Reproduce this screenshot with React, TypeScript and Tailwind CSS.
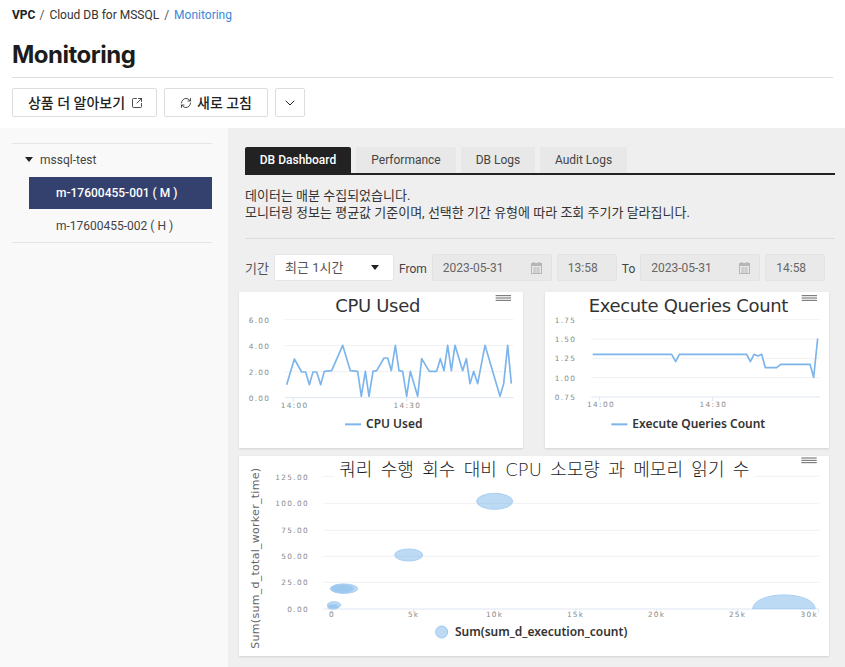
import { ChevronDown, RefreshCw, SquareArrowOutUpRight } from "lucide-react";

const SANS = "font-['Roboto','Noto_Sans_CJK_KR',sans-serif]";

// chart coordinates are 3x card pixels, same scale as the zoomed reference
const cpuPoints =
  "155,290 178,213 200,252 212,252 223,290 234,252 245,252 257,290 268,250 290,248 323,172 346,248 368,250 379,325 391,250 402,325 414,250 425,248 447,210 458,210 469,248 481,172 492,248 503,250 515,325 526,250 548,325 560,212 583,250 605,250 616,212 627,248 638,172 649,248 660,172 683,248 694,212 705,287 716,250 728,287 750,172 795,325 806,287 818,172 829,287";
const queryPoints =
  "158,199 395,199 407,221 418,199 620,199 631,221 642,199 654,204 665,199 676,239 710,239 722,229 810,229 821,268 833,152";

const tabs = [
  { label: "Performance", width: "w-[100px]" },
  { label: "DB Logs", width: "w-[74px]" },
  { label: "Audit Logs", width: "w-[87px]" },
];

function MenuIcon({ x, y }: { x: number; y: number }) {
  return (
    <g className="stroke-[#666666]" strokeWidth={3}>
      <line x1={x} x2={x + 46} y1={y} y2={y} />
      <line x1={x} x2={x + 46} y1={y + 7} y2={y + 7} />
      <line x1={x} x2={x + 46} y1={y + 14} y2={y + 14} />
    </g>
  );
}

function AxisLabel({ x, y, end, children }: { x: number; y: number; end?: boolean; children: string }) {
  return (
    <text
      x={x}
      y={y}
      textAnchor={end ? "end" : "middle"}
      className="fill-[#888888] font-['DejaVu_Sans',sans-serif] text-[22px] tracking-[4px]"
    >
      {children}
    </text>
  );
}

function LineChart({
  viewBox,
  title,
  titleX,
  points,
  gridY,
  gridX,
  labels,
  labelX,
  ticks,
  legendX,
  tickLabelY,
}: {
  viewBox: string;
  title: string;
  titleX: number;
  points: string;
  gridY: number[];
  gridX: [number, number];
  labels: string[];
  labelX: number;
  ticks: [number, number];
  legendX: number;
  tickLabelY: number;
}) {
  const axisY = gridY[gridY.length - 1];
  return (
    <svg viewBox={viewBox} className="h-[156px] w-[284px] bg-white shadow-[0_1px_2px_rgba(0,0,0,0.12)]">
      <text
        x={titleX}
        y={72}
        textAnchor="middle"
        className="fill-[#333333] font-['DejaVu_Sans',sans-serif] text-[54px] tracking-[-1px]"
      >
        {title}
      </text>
      <MenuIcon x={titleX === 428 ? 782 : 785} y={23} />
      {gridY.map((y, i) => (
        <line
          key={y}
          x1={gridX[0]}
          x2={gridX[1]}
          y1={y}
          y2={y}
          strokeWidth={3}
          className={i === gridY.length - 1 ? "stroke-[#dfe6f3]" : "stroke-[#f1f1f1]"}
        />
      ))}
      {labels.map((label, i) => (
        <AxisLabel key={label} x={labelX} y={gridY[i] + 9} end>
          {label}
        </AxisLabel>
      ))}
      <line x1={ticks[0]} x2={ticks[0]} y1={axisY} y2={axisY + 12} strokeWidth={3} className="stroke-[#dfe6f3]" />
      <line x1={ticks[1]} x2={ticks[1]} y1={axisY} y2={axisY + 12} strokeWidth={3} className="stroke-[#dfe6f3]" />
      <AxisLabel x={ticks[0] + 4} y={tickLabelY}>
        14:00
      </AxisLabel>
      <AxisLabel x={ticks[1] + 2} y={tickLabelY}>
        14:30
      </AxisLabel>
      <polyline points={points} fill="none" strokeWidth={5} strokeLinejoin="round" className="stroke-[#7cb5ec]" />
      <line x1={legendX} x2={legendX + 48} y1={409} y2={409} strokeWidth={6} className="stroke-[#7cb5ec]" />
      <text
        x={legendX + 63}
        y={420}
        className="fill-[#333333] font-['Noto_Sans',sans-serif] text-[36px] font-semibold"
      >
        {title}
      </text>
    </svg>
  );
}

function BubbleChart() {
  const gridY = [154, 235, 313, 391];
  const yLabels: [string, number][] = [
    ["125.00", 83],
    ["100.00", 163],
    ["75.00", 242],
    ["50.00", 321],
    ["25.00", 400],
    ["0.00", 480],
  ];
  const xLabels: [string, number][] = [
    ["0", 291],
    ["5k", 536],
    ["10k", 779],
    ["15k", 1022],
    ["20k", 1265],
    ["25k", 1508],
    ["30k", 1723],
  ];
  const ticks = [291, 536, 779, 1022, 1265, 1508, 1751];
  return (
    <svg viewBox="12 12 1770 600" className="h-[200px] w-[590px] bg-white shadow-[0_1px_2px_rgba(0,0,0,0.12)]">
      <text
        x={928}
        y={73}
        textAnchor="middle"
        className="fill-[#1c1c1c] font-['DejaVu_Sans','Noto_Sans_CJK_KR',sans-serif] text-[54px] font-light [word-spacing:8px]"
      >
        쿼리 수행 회수 대비 CPU 소모량 과 메모리 읽기 수
      </text>
      <MenuIcon x={1699} y={18} />
      <line x1={265} x2={298} y1={73} y2={73} strokeWidth={3} className="stroke-[#f1f1f1]" />
      <line x1={1560} x2={1752} y1={73} y2={73} strokeWidth={3} className="stroke-[#f1f1f1]" />
      {gridY.map((y) => (
        <line key={y} x1={265} x2={1752} y1={y} y2={y} strokeWidth={3} className="stroke-[#f1f1f1]" />
      ))}
      <line x1={265} x2={1752} y1={471} y2={471} strokeWidth={3} className="stroke-[#dfe6f3]" />
      {ticks.map((x) => (
        <line key={x} x1={x} x2={x} y1={471} y2={483} strokeWidth={3} className="stroke-[#dfe6f3]" />
      ))}
      {yLabels.map(([label, y]) => (
        <AxisLabel key={label} x={222} y={y} end>
          {label}
        </AxisLabel>
      ))}
      {xLabels.map(([label, x]) => (
        <AxisLabel key={label} x={x} y={496}>
          {label}
        </AxisLabel>
      ))}
      <text
        transform="translate(73 319) rotate(-90)"
        textAnchor="middle"
        className="fill-[#666666] font-['DejaVu_Sans',sans-serif] text-[33px]"
        textLength={542}
      >
        Sum(sum_d_total_worker_time)
      </text>
      <g fillOpacity={0.5} strokeWidth={3} className="fill-[#7cb5ec] stroke-[#a9cff2]">
        <ellipse cx={779} cy={148} rx={54} ry={24} />
        <ellipse cx={521} cy={309} rx={42} ry={18} />
        <ellipse cx={327} cy={410} rx={41} ry={14} />
        <ellipse cx={322} cy={410} rx={34} ry={13} />
        <ellipse cx={297} cy={459} rx={20} ry={10} />
        <ellipse cx={294} cy={464} rx={16} ry={7} />
        <path d="M1553 470 C1560 415 1734 415 1741 470 Z" />
      </g>
      <circle cx={620} cy={540} r={18} fillOpacity={0.5} strokeWidth={3} className="fill-[#7cb5ec] stroke-[#9cc8f0]" />
      <text x={660} y={552} className="fill-[#333333] font-['Noto_Sans',sans-serif] text-[36px] font-semibold">
        Sum(sum_d_execution_count)
      </text>
    </svg>
  );
}

function CalendarIcon() {
  return (
    <svg width="11" height="12" viewBox="0 0 11 12" className="shrink-0">
      <rect x="0.5" y="1.5" width="10" height="10" fill="none" stroke="#b5b5b5" />
      <rect x="0.5" y="1.5" width="10" height="2.5" fill="#b5b5b5" />
      <rect x="2" y="0" width="1.5" height="2" fill="#b5b5b5" />
      <rect x="7.5" y="0" width="1.5" height="2" fill="#b5b5b5" />
      <path d="M2 6h7M2 8h7M2 10h7M4 5v6M7 5v6" stroke="#c4c4c4" strokeWidth="1" />
    </svg>
  );
}

function DateBox({ value }: { value: string }) {
  return (
    <div className="flex h-[27px] w-[120px] items-center justify-between rounded-[2px] border border-[#e3e3e3] bg-[#e9e9e9] pr-[9px] pl-[10px] text-[#666666]">
      {value}
      <CalendarIcon />
    </div>
  );
}

function TimeBox({ value }: { value: string }) {
  return (
    <div className="flex h-[27px] w-[60px] items-center rounded-[2px] border border-[#e3e3e3] bg-[#e9e9e9] pl-[10px] text-[#666666]">
      {value}
    </div>
  );
}

export default function App() {
  return (
    <div className={`flex h-[667px] flex-col overflow-hidden bg-white text-xs text-[#222222] ${SANS}`}>
      <header className="h-[128px] shrink-0 px-3">
        <nav className="flex h-[31px] items-center pb-px">
          <b className="font-bold">VPC</b>
          <span className="ml-[4px] text-[#555555]">/</span>
          <span className="ml-[5px] text-[#333333]">Cloud DB for MSSQL</span>
          <span className="ml-[5px] text-[#555555]">/</span>
          <span className="ml-[5px] text-[#3a87d8]">Monitoring</span>
        </nav>
        <div className="flex h-[47px] items-center border-b border-[#dddddd] pt-px">
          <h1 className="font-['Inter',sans-serif] text-2xl font-bold tracking-[-0.5px] text-[#1c1c1c]">Monitoring</h1>
        </div>
        <div className="mt-[10px] flex gap-[7px] text-sm font-medium text-[#222222]">
          <button className="flex h-[29px] w-[145px] items-center justify-center gap-[6px] rounded-[2px] border border-[#dddddd] pl-[2px]">
            상품 더 알아보기
            <SquareArrowOutUpRight size={12} strokeWidth={1.6} />
          </button>
          <button className="flex h-[29px] w-[104px] items-center justify-center gap-[5px] rounded-[2px] border border-[#dddddd]">
            <RefreshCw size={12} strokeWidth={1.6} />
            새로 고침
          </button>
          <button className="flex h-[29px] w-[30px] items-center justify-center rounded-[2px] border border-[#dddddd]">
            <ChevronDown size={16} strokeWidth={1.5} />
          </button>
        </div>
      </header>

      <div className="flex min-h-0 flex-1">
        <aside className="w-[228px] shrink-0 bg-[#f9f9f9] pt-[15px] pr-4 pl-3">
          <div className="border-y border-[#e5e5e5]">
            <div className="flex h-[33px] items-center gap-[7px] pb-[2px] pl-[13px] text-[#444444]">
              <span className="h-0 w-0 border-x-[4px] border-t-[5px] border-x-transparent border-t-[#222222]" />
              mssql-test
            </div>
            <div className="ml-[17px] flex h-[32px] items-center bg-[#34406e] pl-[27px] font-medium text-white">
              m-17600455-001 ( M )
            </div>
            <div className="ml-[17px] flex h-[33px] items-center pl-[27px] text-[#444444]">
              m-17600455-002 ( H )
            </div>
          </div>
        </aside>

        <main className="min-w-0 flex-1 bg-[#efefef] pt-[19px] pr-[10px] pl-[17px]">
          <div className="flex gap-[5px] border-b-2 border-[#222222]">
            <div className="flex h-[26px] w-[106px] items-center justify-center rounded-t-[2px] bg-[#222222] font-medium text-white">
              DB Dashboard
            </div>
            {tabs.map((tab) => (
              <div
                key={tab.label}
                className={`flex h-[26px] items-center justify-center rounded-t-[2px] bg-[#e8e8e8] text-[#444444] ${tab.width}`}
              >
                {tab.label}
              </div>
            ))}
          </div>

          <div className="border-b border-[#dddddd] pt-[12px] pb-[17px] text-[13px] leading-[17px] text-[#333333]">
            <p>데이터는 매분 수집되었습니다.</p>
            <p>모니터링 정보는 평균값 기준이며, 선택한 기간 유형에 따라 조회 주기가 달라집니다.</p>
          </div>

          <div className="mt-[15px] flex items-center text-[#555555]">
            <span className="w-[29px] pt-[2px] text-[13px]">기간</span>
            <div className="flex h-[27px] w-[120px] items-center justify-between rounded-[2px] border border-[#e5e5e5] bg-white pr-[14px] pl-[10px] text-[13px]">
              최근 1시간
              <span className="h-0 w-0 border-x-[4px] border-t-[5px] border-x-transparent border-t-[#222222]" />
            </div>
            <span className="mr-[5px] ml-[5px] pt-[2px] text-[#444444]">From</span>
            <DateBox value="2023-05-31" />
            <div className="ml-[5px]">
              <TimeBox value="13:58" />
            </div>
            <span className="mr-[5px] ml-[5px] pt-[2px] text-[#444444]">To</span>
            <DateBox value="2023-05-31" />
            <div className="ml-[5px]">
              <TimeBox value="14:58" />
            </div>
          </div>

          <div className="mt-[11px] -ml-[6px] flex flex-col gap-2">
            <div className="flex gap-[22px]">
              <LineChart
                viewBox="12 12 852 468"
                title="CPU Used"
                titleX={428}
                points={cpuPoints}
                gridY={[95, 173, 251, 329]}
                gridX={[150, 835]}
                labels={["6.00", "4.00", "2.00", "0.00"]}
                labelX={106}
                ticks={[175, 515]}
                legendX={330}
                tickLabelY={359}
              />
              <LineChart
                viewBox="15 12 852 468"
                title="Execute Queries Count"
                titleX={445}
                points={queryPoints}
                gridY={[95, 153, 211, 269, 327]}
                gridX={[153, 840]}
                labels={["1.75", "1.50", "1.25", "1.00", "0.75"]}
                labelX={109}
                ticks={[179, 518]}
                legendX={214}
                tickLabelY={356}
              />
            </div>
            <BubbleChart />
          </div>
        </main>
      </div>
    </div>
  );
}
